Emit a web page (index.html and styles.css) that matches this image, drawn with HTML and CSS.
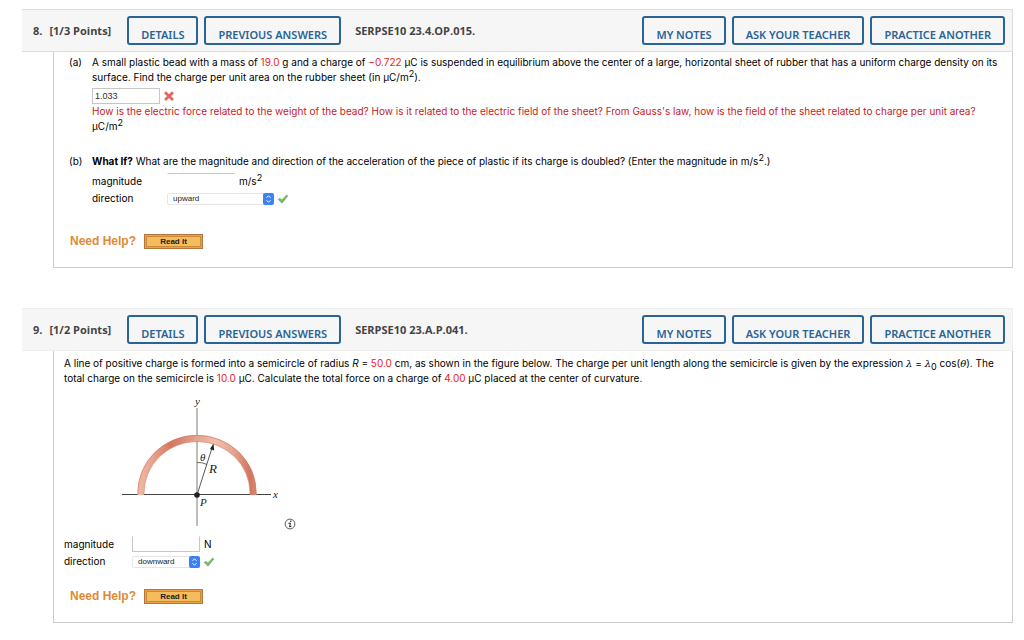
FILE: index.html
```html
<!DOCTYPE html>
<html lang="en">
<head>
    <meta charset="UTF-8">
    <meta name="viewport" content="width=device-width, initial-scale=1.0">
    <title>Homework</title>
    <link rel="stylesheet" href="styles.css">
</head>
<body>

    <section class="question">
        <header class="question-header">
            <h2 class="points"><span>8.</span> <span>[1/3 Points]</span></h2>
            <button class="btn" type="button">DETAILS</button>
            <button class="btn" type="button">PREVIOUS ANSWERS</button>
            <span class="code">SERPSE10 23.4.OP.015.</span>
            <div class="actions">
                <button class="btn" type="button">MY NOTES</button>
                <button class="btn" type="button">ASK YOUR TEACHER</button>
                <button class="btn" type="button">PRACTICE ANOTHER</button>
            </div>
        </header>
        <div class="question-body">
            <div class="part">
                <span class="part-label">(a)</span>
                <div class="part-content">
                    <p>A small plastic bead with a mass of <span class="value">19.0</span> g and a charge of <span class="value">−0.722</span> µC is suspended in equilibrium above the center of a large, horizontal sheet of rubber that has a uniform charge density on its surface. Find the charge per unit area on the rubber sheet (in µC/m<sup>2</sup>).</p>
                    <div class="answer spaced">
                        <input class="text-box" type="text" value="1.033" aria-label="Charge per unit area">
                        <svg class="mark" viewBox="0 0 10 10" role="img" aria-label="Incorrect">
                            <path d="M1 1.2 L9 9 M9 1.2 L1 9" stroke="#e5635c" stroke-width="2.6" fill="none"/>
                        </svg>
                    </div>
                    <p class="feedback">How is the electric force related to the weight of the bead? How is it related to the electric field of the sheet? From Gauss's law, how is the field of the sheet related to charge per unit area?</p>
                    <p>µC/m<sup>2</sup></p>
                </div>
            </div>
            <div class="part">
                <span class="part-label">(b)</span>
                <div class="part-content">
                    <p><b>What If?</b> What are the magnitude and direction of the acceleration of the piece of plastic if its charge is doubled? (Enter the magnitude in m/s<sup>2</sup>.)</p>
                    <div class="fields wide">
                        <label for="magnitude-8">magnitude</label>
                        <div class="answer">
                            <input class="text-box top-only" type="text" id="magnitude-8">
                            <span>m/s<sup>2</sup></span>
                        </div>
                        <label for="direction-8">direction</label>
                        <div class="answer">
                            <span class="select">
                                <select id="direction-8">
                                    <option>upward</option>
                                </select>
                                <svg class="arrows" viewBox="0 0 10 12" aria-hidden="true">
                                    <path d="M3 4.8 L5 2.8 L7 4.8 M3 7.2 L5 9.2 L7 7.2"/>
                                </svg>
                            </span>
                            <svg class="mark" viewBox="0 0 10 10" role="img" aria-label="Correct">
                                <path d="M0.2 5.6 L2 4.2 L3.8 6 L8.6 1 L9.9 2 L4 9.2 Z" fill="#78b96c" stroke="#5fa355" stroke-width="0.5"/>
                            </svg>
                        </div>
                    </div>
                </div>
            </div>
            <div class="help">
                <span class="help-title">Need Help?</span>
                <button class="read-it" type="button">Read It</button>
            </div>
        </div>
    </section>

    <section class="question">
        <header class="question-header light">
            <h2 class="points"><span>9.</span> <span>[1/2 Points]</span></h2>
            <button class="btn" type="button">DETAILS</button>
            <button class="btn" type="button">PREVIOUS ANSWERS</button>
            <span class="code">SERPSE10 23.A.P.041.</span>
            <div class="actions">
                <button class="btn" type="button">MY NOTES</button>
                <button class="btn" type="button">ASK YOUR TEACHER</button>
                <button class="btn" type="button">PRACTICE ANOTHER</button>
            </div>
        </header>
        <div class="question-body">
            <div class="single">
                <p>A line of positive charge is formed into a semicircle of radius <i>R</i> = <span class="value">50.0</span> cm, as shown in the figure below. The charge per unit length along the semicircle is given by the expression <i class="greek">λ</i> = <i class="greek">λ</i><sub>0</sub> cos(<i class="greek">θ</i>). The total charge on the semicircle is <span class="value">10.0</span> µC. Calculate the total force on a charge of <span class="value">4.00</span> µC placed at the center of curvature.</p>
                <div class="figure">
                    <svg width="164" height="136" viewBox="118 394 164 136">
                        <defs>
                            <linearGradient id="tube" gradientUnits="userSpaceOnUse" x1="138" y1="0" x2="257" y2="0">
                                <stop offset="0" stop-color="#edb9a8"/>
                                <stop offset="0.12" stop-color="#e7a590"/>
                                <stop offset="0.28" stop-color="#d47860"/>
                                <stop offset="0.45" stop-color="#e19b84"/>
                                <stop offset="0.65" stop-color="#efc0ae"/>
                                <stop offset="0.82" stop-color="#e2a08b"/>
                                <stop offset="0.94" stop-color="#d27660"/>
                                <stop offset="1" stop-color="#dc8a74"/>
                            </linearGradient>
                        </defs>
                        <path d="M197 408 V526" stroke="#a8a8a8" stroke-width="1.5"/>
                        <path d="M122 494.5 H271" stroke="#444" stroke-width="1"/>
                        <path d="M137.5 495 V493 A59.5 58 0 0 1 256.5 493 V495 H250 V493 A53 51.5 0 0 0 144 493 V495 Z" fill="url(#tube)"/>
                        <path d="M137.8 495 V493 A59.2 57.7 0 0 1 256.2 493 V495 M250 495 V493 A53 51.5 0 0 0 144 493 V495" fill="none" stroke="#d3755f" stroke-width="0.6"/>
                        <path d="M197 495 L212 448" stroke="#444" stroke-width="0.9"/>
                        <path d="M213.5 443.5 L214.2 450.4 L210 449 Z" fill="#222"/>
                        <path d="M197 462.5 Q202 462 207 464.5" fill="none" stroke="#444" stroke-width="0.8"/>
                        <circle cx="197" cy="495" r="2.8" fill="#222"/>
                        <text x="195" y="405">y</text>
                        <text x="273" y="498">x</text>
                        <text x="200" y="461">θ</text>
                        <text x="209" y="473" class="big">R</text>
                        <text x="200" y="506">P</text>
                    </svg>
                    <svg class="info" width="12" height="12" viewBox="0 0 12 12" role="img" aria-label="Information">
                        <circle cx="6" cy="6" r="4.9" fill="none" stroke="#333" stroke-width="0.8"/>
                        <circle cx="6.8" cy="3.2" r="0.8" fill="#222"/>
                        <path d="M4.4 5.2 H6.5 L5.5 8.8 L7.4 8.2" fill="none" stroke="#222" stroke-width="1"/>
                    </svg>
                </div>
                <div class="fields">
                    <label for="magnitude-9">magnitude</label>
                    <div class="answer">
                        <input class="text-box sides" type="text" id="magnitude-9">
                        <span>N</span>
                    </div>
                    <label for="direction-9">direction</label>
                    <div class="answer">
                        <span class="select">
                            <select id="direction-9">
                                <option>downward</option>
                            </select>
                            <svg class="arrows" viewBox="0 0 10 12" aria-hidden="true">
                                <path d="M3 4.8 L5 2.8 L7 4.8 M3 7.2 L5 9.2 L7 7.2"/>
                            </svg>
                        </span>
                        <svg class="mark" viewBox="0 0 10 10" role="img" aria-label="Correct">
                            <path d="M0.2 5.6 L2 4.2 L3.8 6 L8.6 1 L9.9 2 L4 9.2 Z" fill="#78b96c" stroke="#5fa355" stroke-width="0.5"/>
                        </svg>
                    </div>
                </div>
            </div>
            <div class="help">
                <span class="help-title">Need Help?</span>
                <button class="read-it" type="button">Read It</button>
            </div>
        </div>
    </section>

</body>
</html>
```
FILE: styles.css
```css
* {
    box-sizing: border-box;
}
body {
    margin: 0;
    padding: 9px 11px 16px 22px;
    background-color: #ffffff;
    color: #000000;
    font-family: Inter, Verdana, sans-serif;
    font-size: 10px;
    line-height: 15px;
}
p {
    margin: 0;
}
sup, sub {
    font-size: 9px;
    line-height: 0;
}
.question {
    margin-bottom: 40px;
}
.question:last-child {
    margin-bottom: 0;
}

/* Header bar */
.question-header {
    display: flex;
    align-items: center;
    gap: 6px;
    padding: 6px 7px 6px 11px;
    background-color: #f6f6f6;
    border: 1px solid #dddddd;
    border-left: none;
}
.question-header.light {
    border-color: #eeeeee;
}
.points, .code {
    font-family: "Open Sans", sans-serif;
    font-size: 11px;
    font-weight: 700;
    color: #444444;
}
.points {
    display: flex;
    gap: 7px;
    margin: 0 10px 0 0;
}
.code {
    margin-left: 8px;
}
.actions {
    display: flex;
    gap: 6px;
    margin-left: auto;
}
.btn {
    padding: 9px 12px 1px;
    background-color: transparent;
    border: 2px solid #2a6496;
    border-radius: 3px;
    color: #2a6496;
    font-family: "Noto Sans", "Open Sans", sans-serif;
    font-size: 11px;
    font-weight: 600;
    line-height: 15px;
    white-space: nowrap;
    cursor: pointer;
}

/* Question body */
.question-body {
    margin-left: 31px;
    padding: 3px 10px 18px 15px;
    border: 1px solid #cccccc;
    border-top: none;
}
.part {
    display: flex;
    margin-bottom: 20px;
}
.part-label {
    flex: none;
    width: 23px;
}
.value {
    color: #ee2222;
}
.feedback {
    color: #c9211e;
}
.single {
    margin-left: -5px;
    padding-top: 2px;
}
.greek {
    font-family: "DejaVu Serif", serif;
}

/* Answers */
.answer {
    display: flex;
    align-items: center;
    gap: 4px;
}
.answer.spaced {
    padding-top: 3px;
}
.text-box {
    width: 68px;
    height: 16px;
    padding: 0 2px;
    background-color: #ffffff;
    border: 1px solid #c6c6c6;
    font-family: "Liberation Sans", Arial, sans-serif;
    font-size: 9px;
    color: #333333;
}
.text-box.top-only {
    border-color: #c6c6c6 transparent transparent;
}
.text-box.sides {
    border-top-color: transparent;
}
.mark {
    width: 10px;
    height: 10px;
}
.fields {
    display: grid;
    grid-template-columns: 68px 1fr;
    row-gap: 2px;
    align-items: center;
}
.fields.wide {
    grid-template-columns: 75px 1fr;
    margin-top: 4px;
}
.select {
    position: relative;
    display: flex;
    width: 68px;
}
.wide .select {
    width: 107px;
}
.select select {
    width: 100%;
    height: 12px;
    padding: 0 12px 0 5px;
    appearance: none;
    background-color: #ffffff;
    border: 1px solid #e6e6e6;
    border-radius: 2px;
    font-family: "Liberation Sans", Arial, sans-serif;
    font-size: 8px;
    line-height: 10px;
    color: #222222;
}
.arrows {
    position: absolute;
    top: 0;
    right: 0;
    width: 11px;
    height: 12px;
    border-radius: 2px;
    background-color: #3b82f6;
    fill: none;
    stroke: #ffffff;
    pointer-events: none;
}

/* Figure */
.figure {
    display: flex;
    align-items: flex-end;
    margin: 8px 0 6px 54px;
}
.figure text {
    font-family: "Liberation Serif", serif;
    font-size: 11px;
    font-style: italic;
    fill: #222222;
}
.figure .big {
    font-size: 13px;
}
.info {
    margin-left: 2px;
}

/* Help row */
.help {
    display: flex;
    align-items: center;
    gap: 8px;
    margin: 28px 0 0 1px;
}
.single + .help {
    margin-top: 20px;
}
.help-title {
    font-family: "Liberation Sans", Arial, sans-serif;
    font-size: 12px;
    font-weight: 700;
    color: #e08a35;
}
.read-it {
    width: 59px;
    height: 15px;
    padding: 0;
    background-color: #f5bc5c;
    border: 1px solid #b5743a;
    box-shadow: inset 0 0 0 1px #eda04a, inset 0 0 0 2px #c98a3c;
    font-family: "Liberation Sans", Arial, sans-serif;
    font-size: 8px;
    font-weight: 700;
    line-height: 12px;
    color: #222222;
    cursor: pointer;
}
```
